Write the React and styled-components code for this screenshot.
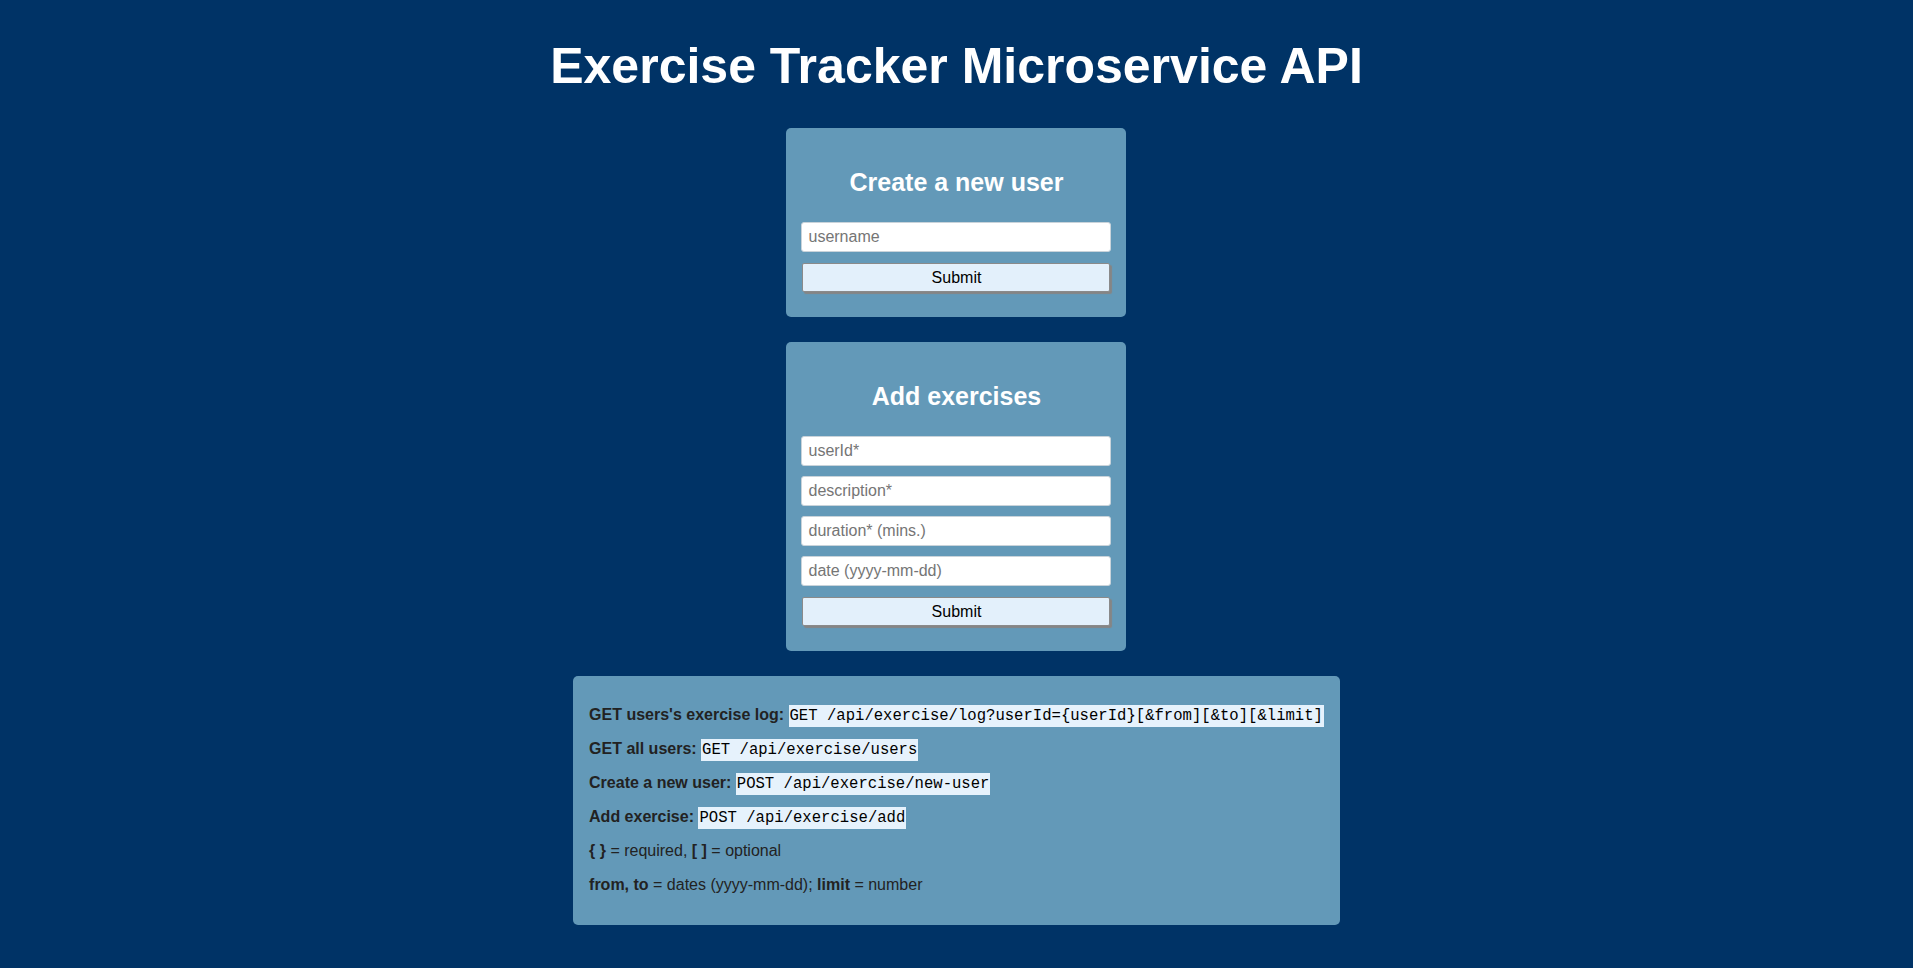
import React, { useState } from 'react';
import styled, { createGlobalStyle } from 'styled-components';

const GlobalStyle = createGlobalStyle`
  html, body {
    margin: 0;
    padding: 0;
    background-color: #003366;
  }
  body {
    font-family: "Liberation Sans", Arial, Helvetica, sans-serif;
    font-size: 16px;
    color: #222;
  }
`;

const Page = styled.div`
  min-height: 100vh;
  box-sizing: border-box;
  padding: 41px 0 20px;
  display: flex;
  flex-direction: column;
  align-items: center;
`;

const Title = styled.h1`
  margin: 0 0 37px;
  font-size: 50px;
  line-height: 50px;
  font-weight: bold;
  color: #fff;
`;

const Stack = styled.div`
  display: flex;
  flex-direction: column;
  align-items: center;
  gap: 25px;
`;

const Card = styled.form`
  width: 340px;
  box-sizing: border-box;
  background-color: #6399b8;
  border-radius: 5px;
  padding: 42px 15px 25px;
  display: flex;
  flex-direction: column;
`;

const CardTitle = styled.h2`
  margin: 0 0 27px;
  font-size: 25px;
  line-height: 25px;
  font-weight: bold;
  text-align: center;
  color: #fff;
`;

const Fields = styled.div`
  display: flex;
  flex-direction: column;
  gap: 10px;
`;

const Input = styled.input`
  display: block;
  width: 100%;
  height: 30px;
  box-sizing: border-box;
  margin: 0;
  padding: 0 6px;
  border: 1px solid #c9d3da;
  border-radius: 3px;
  background: #fff;
  font-family: "Liberation Sans", Arial, Helvetica, sans-serif;
  font-size: 16px;
  color: #222;
  outline: none;
  &::placeholder {
    color: #757575;
  }
`;

const SubmitButton = styled.button`
  display: block;
  width: calc(100% - 2px);
  height: 29px;
  margin: 11px 0 0 1px;
  padding: 0;
  box-sizing: border-box;
  background-color: #e3f0fb;
  border: 1px solid #8a8a8a;
  border-radius: 2px;
  box-shadow: 2px 2px 1px #858585;
  font-family: "Liberation Sans", Arial, Helvetica, sans-serif;
  font-size: 16px;
  color: #000;
  cursor: pointer;
`;

const InfoCard = styled.div`
  width: fit-content;
  background-color: #6399b8;
  border-radius: 5px;
  padding: 28px 16px 29px;
  display: flex;
  flex-direction: column;
  gap: 12px;
`;

const Row = styled.p`
  margin: 0;
  height: 22px;
  line-height: 22px;
  white-space: nowrap;
  color: #222;
`;

const Code = styled.code`
  font-family: "Liberation Mono", "Courier New", monospace;
  font-size: 15.6px;
  line-height: 1;
  padding: 2px 1px;
  background-color: #e6f2fc;
  color: #000;
`;

const App = () => {
  const [username, setUsername] = useState('');
  const [exercise, setExercise] = useState({ userId: '', description: '', duration: '', date: '' });

  const exerciseFields = [
    { name: 'userId', placeholder: 'userId*' },
    { name: 'description', placeholder: 'description*' },
    { name: 'duration', placeholder: 'duration* (mins.)' },
    { name: 'date', placeholder: 'date (yyyy-mm-dd)' },
  ];

  const handleSubmit = (event) => {
    event.preventDefault();
  };

  return (
    <>
      <GlobalStyle />
      <Page>
        <Title>Exercise Tracker Microservice API</Title>
        <Stack>
          <Card onSubmit={handleSubmit}>
            <CardTitle>Create a new user</CardTitle>
            <Fields>
              <Input
                type="text"
                placeholder="username"
                value={username}
                onChange={(e) => setUsername(e.target.value)}
              />
            </Fields>
            <SubmitButton type="submit">Submit</SubmitButton>
          </Card>

          <Card onSubmit={handleSubmit}>
            <CardTitle>Add exercises</CardTitle>
            <Fields>
              {exerciseFields.map((field) => (
                <Input
                  key={field.name}
                  type="text"
                  placeholder={field.placeholder}
                  value={exercise[field.name]}
                  onChange={(e) => setExercise({ ...exercise, [field.name]: e.target.value })}
                />
              ))}
            </Fields>
            <SubmitButton type="submit">Submit</SubmitButton>
          </Card>

          <InfoCard>
            <Row>
              <strong>GET users's exercise log:</strong>{' '}
              <Code>GET /api/exercise/log?userId={'{userId}'}[&amp;from][&amp;to][&amp;limit]</Code>
            </Row>
            <Row>
              <strong>GET all users:</strong> <Code>GET /api/exercise/users</Code>
            </Row>
            <Row>
              <strong>Create a new user:</strong> <Code>POST /api/exercise/new-user</Code>
            </Row>
            <Row>
              <strong>Add exercise:</strong> <Code>POST /api/exercise/add</Code>
            </Row>
            <Row>
              <strong>{'{ }'}</strong> = required, <strong>[ ]</strong> = optional
            </Row>
            <Row>
              <strong>from, to</strong> = dates (yyyy-mm-dd); <strong>limit</strong> = number
            </Row>
          </InfoCard>
        </Stack>
      </Page>
    </>
  );
};

export default App;
